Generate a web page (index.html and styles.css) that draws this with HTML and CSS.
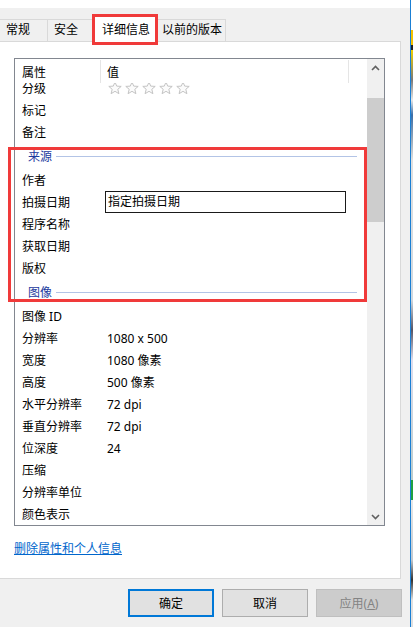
FILE: index.html
```html
<!DOCTYPE html>
<html lang="zh-CN">
<head>
<meta charset="utf-8">
<title>属性</title>
<link rel="stylesheet" href="styles.css">
</head>
<body>
<div class="screen">
  <div class="dialog">
    <div class="topbar"></div>
    <div class="tabs">
      <div class="tab tab-1">常规</div>
      <div class="tab tab-2">安全</div>
      <div class="tab tab-sel">详细信息<span class="mark mark-tab"></span></div>
      <div class="tab tab-4">以前的版本</div>
    </div>
    <div class="panel">
      <div class="listbox">
        <div class="list-main">
          <div class="list-head">
            <div class="hcell hname">属性</div>
            <div class="hcell hvalue">值</div>
          </div>
          <div class="list-body">
            <div class="row first">
              <div class="name">分级</div>
              <div class="value stars">
                <svg width="86" height="14" viewBox="0 0 86 14">
                  <g fill="#fbfbfb" stroke="#c4c4c4" stroke-width="1" stroke-linejoin="round">
                    <polygon points="7,1 8.7,5.1 13.2,5.4 9.8,8.3 10.9,12.7 7,10.3 3.1,12.7 4.2,8.3 0.8,5.4 5.3,5.1"/>
                    <polygon transform="translate(17 0)" points="7,1 8.7,5.1 13.2,5.4 9.8,8.3 10.9,12.7 7,10.3 3.1,12.7 4.2,8.3 0.8,5.4 5.3,5.1"/>
                    <polygon transform="translate(34 0)" points="7,1 8.7,5.1 13.2,5.4 9.8,8.3 10.9,12.7 7,10.3 3.1,12.7 4.2,8.3 0.8,5.4 5.3,5.1"/>
                    <polygon transform="translate(51 0)" points="7,1 8.7,5.1 13.2,5.4 9.8,8.3 10.9,12.7 7,10.3 3.1,12.7 4.2,8.3 0.8,5.4 5.3,5.1"/>
                    <polygon transform="translate(68 0)" points="7,1 8.7,5.1 13.2,5.4 9.8,8.3 10.9,12.7 7,10.3 3.1,12.7 4.2,8.3 0.8,5.4 5.3,5.1"/>
                  </g>
                </svg>
              </div>
            </div>
            <div class="row"><div class="name">标记</div></div>
            <div class="row"><div class="name">备注</div></div>
            <div class="group"><span class="gtext">来源</span><span class="gline"></span></div>
            <div class="row"><div class="name">作者</div></div>
            <div class="row"><div class="name">拍摄日期</div><div class="edit">指定拍摄日期</div></div>
            <div class="row"><div class="name">程序名称</div></div>
            <div class="row"><div class="name">获取日期</div></div>
            <div class="row"><div class="name">版权</div></div>
            <div class="group"><span class="gtext">图像</span><span class="gline"></span></div>
            <div class="row"><div class="name">图像 ID</div></div>
            <div class="row"><div class="name">分辨率</div><div class="value">1080 x 500</div></div>
            <div class="row"><div class="name">宽度</div><div class="value">1080 像素</div></div>
            <div class="row"><div class="name">高度</div><div class="value">500 像素</div></div>
            <div class="row"><div class="name">水平分辨率</div><div class="value">72 dpi</div></div>
            <div class="row"><div class="name">垂直分辨率</div><div class="value">72 dpi</div></div>
            <div class="row"><div class="name">位深度</div><div class="value">24</div></div>
            <div class="row"><div class="name">压缩</div></div>
            <div class="row"><div class="name">分辨率单位</div></div>
            <div class="row"><div class="name">颜色表示</div></div>
          </div>
        </div>
        <div class="scrollbar">
          <div class="sb-btn">
            <svg width="9" height="6" viewBox="0 0 9 6"><polyline points="1,5 4.5,1.5 8,5" fill="none" stroke="#606060" stroke-width="1.6"/></svg>
          </div>
          <div class="sb-track">
            <div class="sb-thumb"></div>
          </div>
          <div class="sb-btn">
            <svg width="9" height="6" viewBox="0 0 9 6"><polyline points="1,1 4.5,4.5 8,1" fill="none" stroke="#606060" stroke-width="1.6"/></svg>
          </div>
        </div>
      </div>
      <a class="link" href="#">删除属性和个人信息</a>
      <span class="mark mark-group"></span>
    </div>
    <div class="footer">
      <button class="btn btn-default">确定</button>
      <button class="btn">取消</button>
      <button class="btn btn-disabled">应用(<u>A</u>)</button>
    </div>
  </div>
  <div class="edge"></div>
  <div class="desktop"></div>
</div>
</body>
</html>
```

FILE: styles.css
```css
* { box-sizing: border-box; }

html, body {
  margin: 0;
  padding: 0;
}

body {
  width: 413px;
  height: 627px;
  overflow: hidden;
  font-family: "Noto Sans", "Noto Sans CJK SC", sans-serif;
  font-size: 12px;
  color: #000;
  background: #f0f0f0;
}

.screen {
  display: flex;
  width: 413px;
  height: 627px;
}

.dialog {
  width: 410px;
  height: 627px;
  display: flex;
  flex-direction: column;
  background: #f0f0f0;
}

.edge {
  width: 1px;
  background: #1a7fd4;
}

.desktop {
  width: 2px;
  background: linear-gradient(to bottom,
    #ffffff 0, #ffffff 30px, #f3c200 30px, #f3c200 45px, #222 45px, #222 50px,
    #f0d000 50px, #7a7a7a 80px, #e8e8e8 100px, #3a6ea8 115px, #9ab 140px,
    #e0e0e0 160px, #cfd8e0 300px, #556 330px, #dde 360px, #bcc 480px,
    #20a040 480px, #20a040 500px, #e8e8e8 500px, #c0c8d0 560px, #333 580px, #e0e0e0 600px);
}

.topbar {
  height: 8px;
  background: #ffffff;
  flex: none;
}

/* ---------- tabs ---------- */
.tabs {
  height: 33px;
  flex: none;
  display: flex;
  align-items: flex-end;
  position: relative;
  z-index: 2;
}

.tab {
  height: 22px;
  line-height: 20px;
  border: 1px solid #d9d9d9;
  border-bottom: none;
  background: #f0f0f0;
  padding-left: 6px;
  white-space: nowrap;
}

.tab-1 { width: 48px; border-left: none; }
.tab-2 { width: 45px; border-left: none; padding-left: 6px; }
.tab-sel {
  position: relative;
  width: 65px;
  height: 27px;
  margin-bottom: -1px;
  line-height: 28px;
  background: #ffffff;
  border-left: none;
  padding-left: 9px;
}
.tab-4 { width: 68px; border-left: none; padding-left: 4px; }

.mark {
  position: absolute;
  border: 3px solid #f03a3a;
  pointer-events: none;
}

.mark-tab {
  left: -1px;
  top: -2px;
  width: 66px;
  height: 31px;
}

/* ---------- panel ---------- */
.panel {
  position: relative;
  width: 401px;
  height: 538px;
  flex: none;
  background: #ffffff;
  border-top: 1px solid #d9d9d9;
  border-right: 1px solid #d9d9d9;
  border-bottom: 1px solid #d9d9d9;
  padding: 16px 0 0 14px;
}

.mark-group {
  left: 8px;
  top: 105px;
  width: 359px;
  height: 155px;
}

.listbox {
  width: 371px;
  height: 468px;
  border: 1px solid #828790;
  display: flex;
}

.list-main {
  flex: 1;
  display: flex;
  flex-direction: column;
  overflow: hidden;
}

.list-head {
  height: 24px;
  flex: none;
  display: flex;
  position: relative;
  z-index: 1;
  background: #fff;
}

.hcell {
  height: 24px;
  line-height: 24px;
  padding-top: 1px;
  border-right: 1px solid #e5e5e5;
  margin: 1px 0 0 0;
  height: 23px;
}

.hname {
  width: 86px;
  padding-left: 7px;
}

.hvalue {
  width: 248px;
  padding-left: 6px;
}

.list-body {
  flex: 1;
  overflow: hidden;
}

.row {
  height: 22px;
  display: flex;
  align-items: center;
}

.row.first {
  margin-top: -6px;
}

.name {
  width: 86px;
  padding-left: 7px;
  white-space: nowrap;
  flex: none;
}

.value {
  padding-left: 6px;
  white-space: nowrap;
}

.stars {
  display: flex;
  align-items: center;
  padding-left: 7px;
}

.stars svg { display: block; }

.edit {
  margin-left: 4px;
  width: 241px;
  height: 22px;
  border: 1px solid #1a1a1a;
  line-height: 19px;
  padding-left: 2px;
}

.group {
  height: 26px;
  display: flex;
  align-items: center;
  padding-left: 13px;
  padding-right: 10px;
}

.gtext {
  color: #1c3a9e;
  padding-bottom: 1px;
}

.gline {
  flex: 1;
  height: 1px;
  margin-left: 4px;
  background: #b3c4e6;
}

/* ---------- scrollbar ---------- */
.scrollbar {
  width: 17px;
  flex: none;
  display: flex;
  flex-direction: column;
  background: #f0f0f0;
}

.sb-btn {
  height: 17px;
  flex: none;
  display: flex;
  align-items: center;
  justify-content: center;
}

.sb-btn svg { display: block; }

.sb-track {
  flex: 1;
  padding-top: 22px;
}

.sb-thumb {
  width: 17px;
  height: 124px;
  background: #cdcdcd;
}

/* ---------- link ---------- */
.link {
  display: block;
  width: max-content;
  margin-top: 15px;
  line-height: 16px;
  color: #0066cc;
  text-decoration: underline;
}

/* ---------- footer ---------- */
.footer {
  flex: 1;
  display: flex;
  gap: 8px;
  padding: 10px 0 0 128px;
}

.btn {
  width: 86px;
  height: 28px;
  font-family: "Noto Sans", "Noto Sans CJK SC", sans-serif;
  font-size: 12px;
  color: #000;
  background: #e1e1e1;
  border: 1px solid #adadad;
  padding: 0;
  margin: 0;
}

.btn-default {
  border: 2px solid #0078d7;
}

.btn-disabled {
  background: #cccccc;
  border-color: #bfbfbf;
  color: #838383;
}

.btn u { text-decoration: underline; }
```
